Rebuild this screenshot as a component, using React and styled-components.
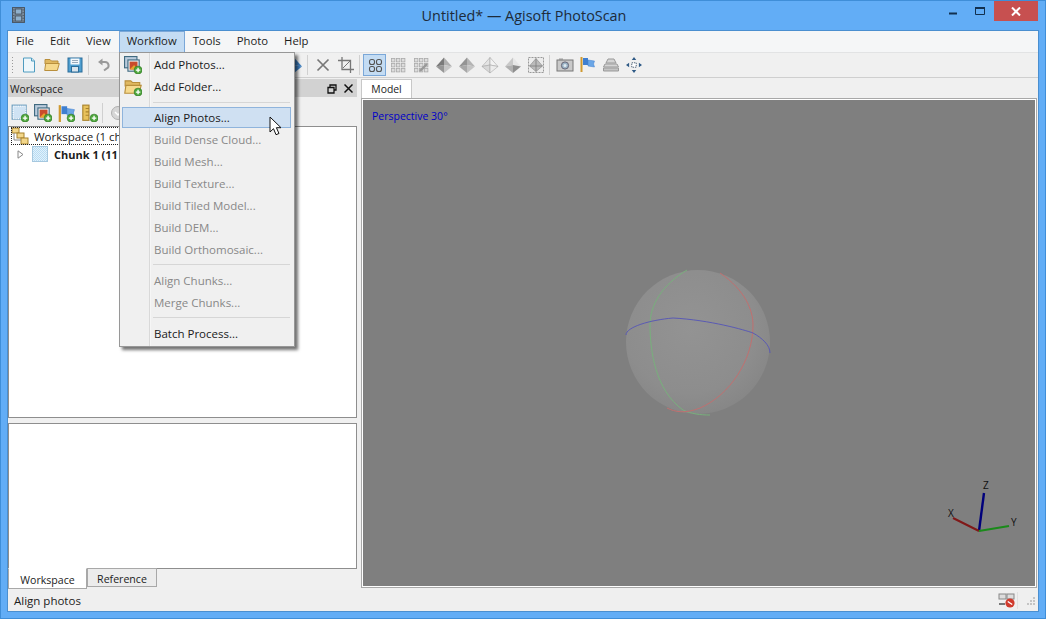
import React from 'react';
import styled, { createGlobalStyle } from 'styled-components';

const Global = createGlobalStyle`
  html, body { margin: 0; padding: 0; overflow: hidden; background: #62adf6; }
  * { box-sizing: border-box; }
`;

const Win = styled.div`
  width: 1046px;
  height: 619px;
  display: flex;
  flex-direction: column;
  position: relative;
  background: #62adf6;
  border: 1px solid #3f8ed8;
  font-family: "Open Sans", "Noto Sans", sans-serif;
  font-size: 11.5px;
  color: #1c1c1c;
  overflow: hidden;
`;
const TitleBar = styled.div`
  height: 29px;
  flex: none;
  display: flex;
  align-items: flex-start;
`;
const AppIcon = styled.div`
  margin: 6px 0 0 11px;
  width: 14px;
  height: 18px;
`;
const TitleText = styled.div`
  flex: 1;
  text-align: center;
  font-size: 14.4px;
  line-height: 30px;
  color: #1d2b3a;
  padding-left: 82px;
`;
const WinButtons = styled.div`
  display: flex;
  align-items: flex-start;
  margin-right: 7px;
`;
const WinBtn = styled.div`
  width: ${p => p.$w}px;
  height: 20px;
  display: flex;
  align-items: center;
  justify-content: center;
  background: ${p => p.$close ? '#c75050' : 'transparent'};
`;
const Client = styled.div`
  flex: 1;
  margin: 0 6px 6px;
  display: flex;
  flex-direction: column;
  background: #f0f0f0;
  border: 1px solid #4a8fd0;
  min-height: 0;
`;
const MenuBar = styled.div`
  height: 21px;
  flex: none;
  display: flex;
  background: #f5f6f7;
`;
const MenuTitle = styled.div`
  padding: 0 7px;
  font-size: 11.3px;
  line-height: 18px;
  border: 1px solid ${p => p.$open ? '#7aa7d8' : 'transparent'};
  border-bottom: 0;
  background: ${p => p.$open ? '#c4dcf3' : 'transparent'};
`;
const ToolBar = styled.div`
  height: 26px;
  flex: none;
  display: flex;
  align-items: center;
  padding-left: 3px;
  background: #f0f0f0;
  border-top: 1px solid #e2e3e4;
  border-bottom: 1px solid #cfcfcf;
`;
const Grip = styled.div`
  width: 3px;
  height: 18px;
  margin-right: 3px;
  background-image: radial-gradient(#9a9a9a 0.8px, transparent 1px);
  background-size: 3px 3px;
`;
const ToolBtn = styled.div`
  width: 23px;
  height: 22px;
  flex: none;
  display: flex;
  align-items: center;
  justify-content: center;
  border: 1px solid ${p => p.$on ? '#7aa7d8' : 'transparent'};
  background: ${p => p.$on ? '#c4dcf3' : 'transparent'};
`;
const ToolSep = styled.div`
  width: 1px;
  height: 20px;
  flex: none;
  margin: 0 3px 0 2px;
  background: #d0d0d0;
`;
const Hidden = styled.div`
  width: ${p => p.$w}px;
  flex: none;
`;
const Body = styled.div`
  flex: 1;
  min-height: 0;
  display: flex;
`;
const Left = styled.div`
  width: 349px;
  flex: none;
  display: flex;
  flex-direction: column;
  padding-top: 1px;
`;
const DockHead = styled.div`
  height: 18px;
  flex: none;
  display: flex;
  align-items: center;
  padding: 1px 1px 0 2px;
  background: #d2d2d2;
  font-size: 10.3px;
`;
const DockTitle = styled.span`
  flex: 1;
`;
const DockIcon = styled.span`
  width: 16px;
  height: 16px;
  display: flex;
  align-items: center;
  justify-content: center;
`;
const PanelBar = styled.div`
  height: 29px;
  flex: none;
  display: flex;
  align-items: center;
  padding-top: 2px;
`;
const Tree = styled.div`
  flex: 1;
  min-height: 0;
  background: #fff;
  border: 1px solid #8e8e8e;
  overflow: hidden;
`;
const TreeRow = styled.div`
  height: 18px;
  display: flex;
  align-items: center;
  white-space: nowrap;
  padding-left: ${p => p.$indent}px;
`;
const ChunkName = styled.span`
  font-weight: 700;
  font-size: 11px;
`;
const Focus = styled.span`
  display: flex;
  align-items: center;
  gap: 5px;
  height: 18px;
  padding-right: 4px;
  margin-left: 2px;
  outline: 1px dotted #222;
  outline-offset: -1px;
`;
const Lower = styled.div`
  height: 146px;
  flex: none;
  margin-top: 5px;
  background: #fff;
  border: 1px solid #8e8e8e;
`;
const DockTabs = styled.div`
  height: 21px;
  flex: none;
  display: flex;
  align-items: flex-start;
`;
const DockTab = styled.div`
  height: ${p => p.$on ? 21 : 19}px;
  width: ${p => p.$w}px;
  text-align: center;
  font-size: 10.6px;
  line-height: ${p => p.$on ? 22 : 20}px;
  margin-top: -1px;
  background: ${p => p.$on ? '#fff' : '#ececec'};
  border: 1px solid #a8a8a8;
  border-top-color: ${p => p.$on ? '#fff' : '#a8a8a8'};
`;
const Right = styled.div`
  flex: 1;
  min-width: 0;
  display: flex;
  flex-direction: column;
  padding: 1px 1px 2px 4px;
`;
const ModelTab = styled.div`
  width: 51px;
  height: 20px;
  flex: none;
  margin-bottom: -1px;
  position: relative;
  background: #fff;
  border: 1px solid #c8c8c8;
  border-bottom: 0;
  text-align: center;
  font-size: 10.4px;
  line-height: 19px;
`;
const Viewport = styled.div`
  flex: 1;
  min-height: 0;
  position: relative;
  background: #7f7f7f;
  border: 1px solid #a8a8a8;
  box-shadow: inset 0 0 0 1px #fff;
  padding: 10px;
  color: #0000c8;
  font-size: 10.5px;
`;
const Scene = styled.svg`
  position: absolute;
  left: 0;
  top: 0;
`;
const Status = styled.div`
  height: 21px;
  flex: none;
  display: flex;
  align-items: center;
  padding: 0 2px 0 6px;
  background: #efefef;
`;
const StatusText = styled.span`
  flex: 1;
`;
const StatusSep = styled.span`
  width: 1px;
  height: 17px;
  margin: 0 8px 0 1px;
  background: #e0e0e0;
`;
const Menu = styled.div`
  position: absolute;
  left: 118px;
  top: 51px;
  width: 176px;
  padding: 0 2px 2px;
  background: linear-gradient(90deg, #f0f0f0 29px, #d9d9d9 29px, #d9d9d9 30px, #f6f6f6 30px, #f6f6f6 31px, #f0f0f0 31px);
  border: 1px solid #979797;
  box-shadow: 3px 3px 3px rgba(0, 0, 0, 0.55);
  z-index: 5;
`;
const MenuItem = styled.div`
  height: ${p => p.$on ? 21 : 22}px;
  margin: ${p => p.$on ? '0 1px 0 0' : '0'};
  display: flex;
  align-items: center;
  padding-left: ${p => p.$on ? 31 : 32}px;
  position: relative;
  color: ${p => p.$off ? '#888' : '#1a1a1a'};
  background: ${p => p.$on ? '#cfe0f2' : 'transparent'};
  border: ${p => p.$on ? '1px solid #8fb4dc' : '0'};
`;
const MenuIcon = styled.span`
  position: absolute;
  left: 2px;
  top: 3px;
  width: 18px;
  height: 18px;
`;
const MenuSep = styled.div`
  height: 1px;
  margin: ${p => p.$t}px 2px 4px 31px;
  background: #d6d6d6;
`;
const Cursor = styled.svg`
  position: absolute;
  left: 268px;
  top: 115px;
  z-index: 6;
`;

const Ic = ({ s = 16, vb = 16, children }) => (
  <svg width={s} height={s} viewBox={`0 0 ${vb} ${vb}`}>{children}</svg>
);

const Plus = () => (
  <g>
    <circle cx="12.5" cy="12.5" r="3.5" fill="#4fa83d" stroke="#2f7a25" strokeWidth="0.6" />
    <path d="M12.5 10.5v4M10.5 12.5h4" stroke="#fff" strokeWidth="1.2" />
  </g>
);
const Film = () => (
  <svg width="13" height="16" viewBox="0 0 14 17">
    <rect x="0.5" y="0.5" width="13" height="16" fill="#7f92a4" stroke="#46525e" />
    <rect x="3.5" y="2" width="7" height="5.5" fill="#8fb0cc" stroke="#46525e" />
    <rect x="3.5" y="9.5" width="7" height="5.5" fill="#8fb0cc" stroke="#46525e" />
    <path d="M1.5 3h1M1.5 6h1M1.5 9h1M1.5 12h1M1.5 15h1M11.5 3h1M11.5 6h1M11.5 9h1M11.5 12h1M11.5 15h1" stroke="#2f3840" />
  </svg>
);
const Page = () => (
  <Ic>
    <path d="M2.5 1h8l3 3v11h-11z" fill="#eef7fb" stroke="#4e9cc0" />
    <path d="M10.5 1v3h3" fill="#cfe6f0" stroke="#4e9cc0" />
  </Ic>
);
const Folder = ({ plus, s }) => (
  <Ic s={s}>
    <path d="M1 2.5h5l1.5 1.5H14v3H1z" fill="#e0b860" stroke="#b98f3c" />
    <path d="M.7 13.5l1-7h13.6l-2 7z" fill="#f6d98c" stroke="#b98f3c" />
    {plus && <Plus />}
  </Ic>
);
const Floppy = () => (
  <Ic>
    <rect x="1" y="1" width="14" height="14" fill="#4f9fd0" stroke="#2b6d9a" />
    <rect x="3.5" y="1.5" width="9" height="6" fill="#f4f8fb" />
    <path d="M5 3.5h6M5 5.5h6" stroke="#9ab" />
    <rect x="4.5" y="9.5" width="7" height="5.5" fill="#d9e4ec" stroke="#2b6d9a" />
  </Ic>
);
const Undo = () => (
  <Ic>
    <path d="M4 5h5a3.5 3.5 0 0 1 1.5 6.7L8 13.5" fill="none" stroke="#9a9a9a" strokeWidth="2" />
    <path d="M6.5 1.5v7L2 5z" fill="#9a9a9a" />
  </Ic>
);
const Cross = () => (
  <Ic><path d="M2.5 2.5l11 11M13.5 2.5l-11 11" stroke="#777" strokeWidth="1.7" /></Ic>
);
const Crop = () => (
  <Ic>
    <path d="M4 0v12.5h12M0 3.5h12.5V16" fill="none" stroke="#777" strokeWidth="1.3" />
    <path d="M5 11l7-7" stroke="#777" />
  </Ic>
);
const Grid2 = () => (
  <Ic>
    {[[2, 2], [9, 2], [2, 9], [9, 9]].map(([x, y]) => (
      <rect key={x + '' + y} x={x + 0.5} y={y + 0.5} width="5" height="5" rx="2" fill="none" stroke="#555" strokeWidth="1.1" />
    ))}
  </Ic>
);
const Grid3 = ({ tag }) => (
  <Ic>
    {[1, 6, 11].flatMap(x => [1, 6, 11].map(y => (
      <rect key={x + '-' + y} x={x + 0.5} y={y + 0.5} width="3.4" height="3.4" fill="#ddd" stroke="#aaa" strokeWidth="0.8" />
    )))}
    {tag && <path d="M7 14l7-7" stroke="#999" strokeWidth="2.4" />}
  </Ic>
);
const Pyramid = ({ l = '#7a7a7a', r = '#b0b0b0', lo = '#969696', ro = '#c6c6c6', line = 'none' }) => (
  <Ic s={18} vb={18}>
    <path d="M9 1.5L1 10.5l8-1.5z" fill={l} stroke={line} strokeWidth="0.6" />
    <path d="M9 1.5l8 9-8-1.5z" fill={r} stroke={line} strokeWidth="0.6" />
    <path d="M1 10.5l8 6.5V9z" fill={lo} stroke={line} strokeWidth="0.6" />
    <path d="M17 10.5l-8 6.5V9z" fill={ro} stroke={line} strokeWidth="0.6" />
  </Ic>
);
const TileBox = () => (
  <Ic s={18} vb={18}>
    <rect x="1.5" y="1.5" width="15" height="15" fill="#ececec" stroke="#999" strokeDasharray="2 1" />
    <path d="M9 2.5L2.5 10 9 15.5 15.5 10z" fill="#bbb" stroke="#888" strokeWidth="0.6" />
    <path d="M9 2.5v13M2.5 10h13" stroke="#777" strokeWidth="0.7" />
  </Ic>
);
const Camera = () => (
  <Ic s={18} vb={18}>
    <rect x="1" y="4" width="16" height="11" fill="#c9c9c9" stroke="#777" />
    <rect x="3" y="2.5" width="4" height="2" fill="#999" />
    <circle cx="9" cy="9.5" r="3.6" fill="#9bb4c6" stroke="#667" />
    <circle cx="9" cy="9.5" r="1.5" fill="#dfe8ef" />
  </Ic>
);
const Flags = ({ plus, s = 18 }) => (
  <Ic s={s} vb={plus ? 16 : 18}>
    <path d="M2.5 1v15" stroke="#d09a30" strokeWidth="2" />
    <path d="M4 2h5v7H4z" fill="#3f7fd0" />
    <path d="M9 4l6.5 1-1 3 1 3L9 10z" fill="#6aa6e6" stroke="#3f7fd0" strokeWidth="0.5" />
    {plus && <Plus />}
  </Ic>
);
const Stack = () => (
  <Ic s={18} vb={18}>
    <path d="M6 3h6l2 4H4z" fill="#d4d4d4" stroke="#999" />
    <path d="M3 8h12l1.5 3h-15z" fill="#d4d4d4" stroke="#999" />
    <path d="M1.5 12h15v3h-15z" fill="#c4c4c4" stroke="#999" />
  </Ic>
);
const Move = () => (
  <Ic s={16} vb={18}>
    <rect x="6.5" y="6.5" width="5" height="5" fill="#fff" stroke="#40566c" strokeDasharray="1.5 1" />
    <path d="M9 0l2.5 3.5h-5zM9 18l2.5-3.5h-5zM0 9l3.5-2.5v5zM18 9l-3.5-2.5v5z" fill="#2f5a86" />
  </Ic>
);
const AddImage = () => (
  <Ic s={18}>
    <rect x="1" y="1" width="12.5" height="12.5" fill="#cfe3f4" stroke="#70a0c0" />
    <path d="M2 2h11v11H2z" fill="none" stroke="#fff" strokeDasharray="1 1" />
    <Plus />
  </Ic>
);
const Photos = ({ plus, s = 18 }) => (
  <Ic s={s}>
    <rect x="0.5" y="0.5" width="11" height="10" fill="#bcd" stroke="#406a80" />
    <rect x="3.5" y="3.5" width="10" height="10" fill="#e9f0f4" stroke="#406a80" />
    <rect x="5" y="5" width="7" height="7" fill="#c94b2c" />
    <path d="M5 12l4-4 3 4z" fill="#e4a52c" />
    {plus && <Plus />}
  </Ic>
);
const Ruler = () => (
  <Ic s={18}>
    <rect x="2.5" y="1" width="5.5" height="13.5" fill="#e8c25c" stroke="#a8822c" />
    <path d="M5 4h3M5 7h3M5 10h3" stroke="#a8822c" />
    <Plus />
  </Ic>
);
const GreyDisc = () => (
  <Ic>
    <circle cx="8" cy="8" r="6.5" fill="#d6d6d6" stroke="#b0b0b0" />
    <path d="M5 7l3 3 3-3" fill="none" stroke="#fff" strokeWidth="1.5" />
  </Ic>
);
const ChunkIcon = () => (
  <svg width="16" height="16" viewBox="0 0 16 16">
    <defs>
      <pattern id="chk" width="2" height="2" patternUnits="userSpaceOnUse">
        <rect width="2" height="2" fill="#e2f1fb" />
        <rect width="1" height="1" fill="#b8dcf3" />
        <rect x="1" y="1" width="1" height="1" fill="#b8dcf3" />
      </pattern>
    </defs>
    <rect x="0.5" y="0.5" width="15" height="15" fill="url(#chk)" stroke="#a6c8df" />
  </svg>
);
const WorkspaceIcon = () => (
  <svg width="18" height="18" viewBox="0 0 18 18">
    <rect x="1" y="1" width="7" height="5" fill="#f3d78a" stroke="#a8822c" />
    <rect x="6" y="6" width="7" height="5" fill="#f3d78a" stroke="#a8822c" />
    <rect x="10" y="11" width="7" height="6" fill="#f3d78a" stroke="#a8822c" />
    <path d="M3 6v7h7" fill="none" stroke="#888" />
  </svg>
);

const MENU = [
  { t: 'Add Photos...', icon: <Photos plus /> },
  { t: 'Add Folder...', icon: <Folder plus s={18} /> },
  { sep: 5 },
  { t: 'Align Photos...', on: true },
  { t: 'Build Dense Cloud...', off: true },
  { t: 'Build Mesh...', off: true },
  { t: 'Build Texture...', off: true },
  { t: 'Build Tiled Model...', off: true },
  { t: 'Build DEM...', off: true },
  { t: 'Build Orthomosaic...', off: true },
  { sep: 4 },
  { t: 'Align Chunks...', off: true },
  { t: 'Merge Chunks...', off: true },
  { sep: 4 },
  { t: 'Batch Process...' },
];

export default function App() {
  return (
    <Win>
      <Global />
      <TitleBar>
        <AppIcon><Film /></AppIcon>
        <TitleText>Untitled* — Agisoft PhotoScan</TitleText>
        <WinButtons>
          <WinBtn $w={26}>
            <svg width="9" height="9" viewBox="0 0 9 9"><path d="M0 6.5h8" stroke="#12304f" strokeWidth="2" /></svg>
          </WinBtn>
          <WinBtn $w={28}>
            <svg width="10" height="8" viewBox="0 0 10 8"><path d="M.5 1h9v6.5h-9z" fill="none" stroke="#12304f" /><path d="M0 1h10" stroke="#12304f" strokeWidth="2" /></svg>
          </WinBtn>
          <WinBtn $w={44} $close>
            <svg width="10" height="9" viewBox="0 0 10 9"><path d="M1 .5l8 8M9 .5l-8 8" stroke="#fff" strokeWidth="2" /></svg>
          </WinBtn>
        </WinButtons>
      </TitleBar>
      <Client>
        <MenuBar>
          <MenuTitle>File</MenuTitle>
          <MenuTitle>Edit</MenuTitle>
          <MenuTitle>View</MenuTitle>
          <MenuTitle $open>Workflow</MenuTitle>
          <MenuTitle>Tools</MenuTitle>
          <MenuTitle>Photo</MenuTitle>
          <MenuTitle>Help</MenuTitle>
        </MenuBar>
        <ToolBar>
          <Grip />
          <ToolBtn><Page /></ToolBtn>
          <ToolBtn><Folder /></ToolBtn>
          <ToolBtn><Floppy /></ToolBtn>
          <ToolSep />
          <ToolBtn><Undo /></ToolBtn>
          <Hidden $w={167} />
          <ToolBtn><Pyramid l="#5f8fc0" r="#3f7fc0" lo="#6aa0d0" ro="#3f7fc0" /></ToolBtn>
          <ToolSep />
          <ToolBtn><Cross /></ToolBtn>
          <ToolBtn><Crop /></ToolBtn>
          <ToolSep />
          <ToolBtn $on><Grid2 /></ToolBtn>
          <ToolBtn><Grid3 /></ToolBtn>
          <ToolBtn><Grid3 tag /></ToolBtn>
          <ToolBtn><Pyramid /></ToolBtn>
          <ToolBtn><Pyramid l="#949494" r="#b4b4b4" lo="#a8a8a8" ro="#c4c4c4" /></ToolBtn>
          <ToolBtn><Pyramid l="#e4e4e4" r="#f2f2f2" lo="#d8d8d8" ro="#ececec" line="#a8a8a8" /></ToolBtn>
          <ToolBtn><Pyramid l="#c8c8c8" r="#e6e6e6" lo="#b0b0b0" ro="#8e8e8e" /></ToolBtn>
          <ToolBtn><TileBox /></ToolBtn>
          <ToolSep />
          <ToolBtn><Camera /></ToolBtn>
          <ToolBtn><Flags /></ToolBtn>
          <ToolBtn><Stack /></ToolBtn>
          <ToolBtn><Move /></ToolBtn>
        </ToolBar>
        <Body>
          <Left>
            <DockHead>
              <DockTitle>Workspace</DockTitle>
              <DockIcon>
                <svg width="10" height="10" viewBox="0 0 10 10"><path d="M3 3V1h6v5H7M1 3.5h6v5.5H1z" fill="none" stroke="#111" strokeWidth="1.3" /></svg>
              </DockIcon>
              <DockIcon>
                <svg width="9" height="9" viewBox="0 0 9 9"><path d="M.5.5l8 8M8.5.5l-8 8" stroke="#111" strokeWidth="1.5" /></svg>
              </DockIcon>
            </DockHead>
            <PanelBar>
              <ToolBtn><AddImage /></ToolBtn>
              <ToolBtn><Photos plus /></ToolBtn>
              <ToolBtn><Flags plus /></ToolBtn>
              <ToolBtn><Ruler /></ToolBtn>
              <ToolSep />
              <ToolBtn><GreyDisc /></ToolBtn>
            </PanelBar>
            <Tree>
              <TreeRow $indent={0}>
                <Focus>
                  <WorkspaceIcon />
                  Workspace (1 chunks, 11 cameras)
                </Focus>
              </TreeRow>
              <TreeRow $indent={8}>
                <svg width="7" height="9" viewBox="0 0 7 9"><path d="M1 .8l5 3.7-5 3.7z" fill="#fff" stroke="#888" /></svg>
                <Hidden $w={8} />
                <ChunkIcon />
                <Hidden $w={6} />
                <ChunkName>Chunk 1 (11 cameras)</ChunkName>
              </TreeRow>
            </Tree>
            <Lower />
            <DockTabs>
              <DockTab $on $w={79}>Workspace</DockTab>
              <DockTab $w={70}>Reference</DockTab>
            </DockTabs>
          </Left>
          <Right>
            <ModelTab>Model</ModelTab>
            <Viewport>
              Perspective 30°
              <Scene width="672" height="486" viewBox="362 99 672 486">
                <defs>
                  <radialGradient id="ball" cx="0.45" cy="0.4" r="0.65">
                    <stop offset="0" stopColor="#939393" />
                    <stop offset="0.7" stopColor="#8d8d8d" />
                    <stop offset="1" stopColor="#858585" />
                  </radialGradient>
                </defs>
                <circle cx="698" cy="342" r="72" fill="url(#ball)" />
                <path d="M687 270C662 285 650 305 650 325C650 350 655 390 683 410C692 414 700 415 710 415" fill="none" stroke="#78b07c" />
                <path d="M720 273C745 290 753 310 753 325C753 360 730 395 700 408C685 414 675 412 667 408" fill="none" stroke="#c07070" />
                <path d="M626 335C626 327 650 320 673 318C710 320 745 330 753 333C762 338 770 345 770 353" fill="none" stroke="#5a5ab4" />
                <path d="M979 531L984 493" stroke="#00007c" strokeWidth="2.4" />
                <path d="M979 531L953 518" stroke="#801818" strokeWidth="2" />
                <path d="M979 531L1009 526" stroke="#1a8a1a" strokeWidth="2" />
                <text x="983" y="489" fontSize="10" fill="#111">Z</text>
                <text x="948" y="517" fontSize="10" fill="#111">X</text>
                <text x="1011" y="526" fontSize="10" fill="#111">Y</text>
              </Scene>
            </Viewport>
          </Right>
        </Body>
        <Status>
          <StatusText>Align photos</StatusText>
          <svg width="18" height="16" viewBox="0 0 18 16">
            <rect x="1" y="1" width="7" height="5" fill="#ddd" stroke="#888" />
            <rect x="9" y="1" width="7" height="5" fill="#ddd" stroke="#888" />
            <path d="M1 11h6" stroke="#777" strokeWidth="2" />
            <circle cx="12" cy="10" r="4.6" fill="#d03a2c" />
            <path d="M9.8 8.5l4.4 3" stroke="#fff" strokeWidth="1.4" />
          </svg>
          <StatusSep />
          <svg width="10" height="10" viewBox="0 0 10 10">
            <path d="M7 1h2v2H7zM4 4h2v2H4zM7 4h2v2H7zM1 7h2v2H1zM4 7h2v2H4zM7 7h2v2H7z" fill="#c4c4c4" />
          </svg>
        </Status>
      </Client>
      <Menu>
        {MENU.map((m, i) => m.sep
          ? <MenuSep key={i} $t={m.sep} />
          : (
            <MenuItem key={i} $on={m.on} $off={m.off}>
              {m.icon && <MenuIcon>{m.icon}</MenuIcon>}
              {m.t}
            </MenuItem>
          ))}
      </Menu>
      <Cursor width="14" height="21" viewBox="0 0 14 21">
        <path d="M1 1v15l3.5-3.3 2.5 6 3-1.2-2.6-5.8H12z" fill="#fff" stroke="#111" />
      </Cursor>
    </Win>
  );
}
